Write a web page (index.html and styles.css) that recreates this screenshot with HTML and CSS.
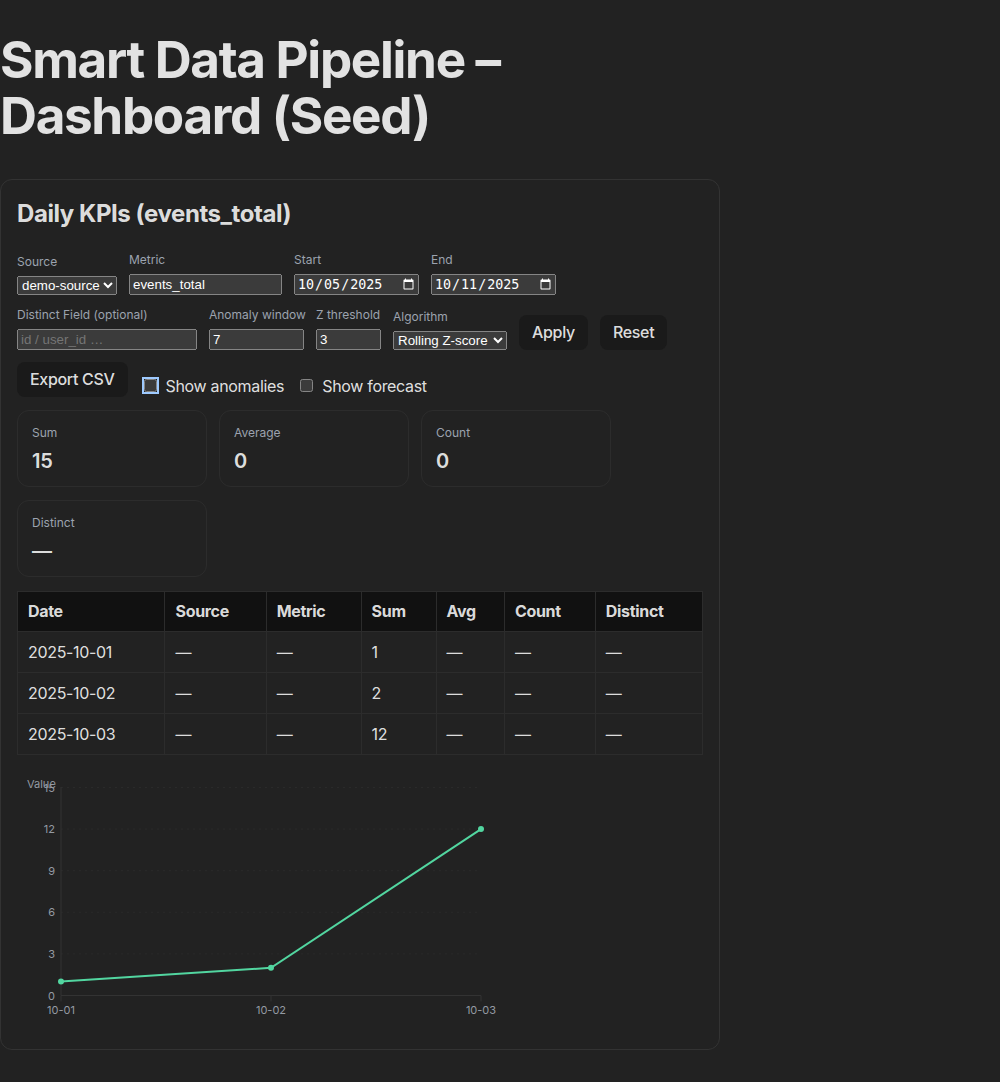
FILE: index.html
```html
<!DOCTYPE html>
<html lang="en">
<head>
<meta charset="utf-8">
<title>Smart Data Pipeline – Dashboard (Seed)</title>
<link rel="stylesheet" href="styles.css">
</head>
<body>
<div class="app">
  <h1 class="title">Smart Data Pipeline – Dashboard (Seed)</h1>
  <section class="card">
    <h2 class="card-title">Daily KPIs (events_total)</h2>

    <div class="controls">
      <label class="field"><span class="field-label">Source</span>
        <select class="ctl sel-source"><option>demo-source</option></select></label>
      <label class="field"><span class="field-label">Metric</span>
        <input class="ctl in-metric" type="text" value="events_total"></label>
      <label class="field"><span class="field-label">Start</span>
        <input class="ctl in-date" type="date" value="2025-10-05"></label>
      <label class="field"><span class="field-label">End</span>
        <input class="ctl in-date" type="date" value="2025-10-11"></label>
      <label class="field"><span class="field-label">Distinct Field (optional)</span>
        <input class="ctl in-distinct" type="text" placeholder="id / user_id …"></label>
      <label class="field"><span class="field-label">Anomaly window</span>
        <input class="ctl in-window" type="number" value="7"></label>
      <label class="field"><span class="field-label">Z threshold</span>
        <input class="ctl in-z" type="number" value="3"></label>
      <label class="field"><span class="field-label">Algorithm</span>
        <select class="ctl sel-algo"><option>Rolling Z-score</option></select></label>
      <button class="btn" type="button">Apply</button>
      <button class="btn" type="button">Reset</button>
    </div>

    <div class="actions">
      <button class="btn" type="button">Export CSV</button>
      <label class="check"><input class="cb cb-focus" type="checkbox">Show anomalies</label>
      <label class="check"><input class="cb" type="checkbox">Show forecast</label>
    </div>

    <div class="kpis">
      <div class="kpi"><div class="kpi-label">Sum</div><div class="kpi-value">15</div></div>
      <div class="kpi"><div class="kpi-label">Average</div><div class="kpi-value">0</div></div>
      <div class="kpi"><div class="kpi-label">Count</div><div class="kpi-value">0</div></div>
      <div class="kpi"><div class="kpi-label">Distinct</div><div class="kpi-value">—</div></div>
    </div>

    <table class="data">
      <thead>
        <tr><th>Date</th><th>Source</th><th>Metric</th><th>Sum</th><th>Avg</th><th>Count</th><th>Distinct</th></tr>
      </thead>
      <tbody>
        <tr><td>2025-10-01</td><td>—</td><td>—</td><td>1</td><td>—</td><td>—</td><td>—</td></tr>
        <tr><td>2025-10-02</td><td>—</td><td>—</td><td>2</td><td>—</td><td>—</td><td>—</td></tr>
        <tr><td>2025-10-03</td><td>—</td><td>—</td><td>12</td><td>—</td><td>—</td><td>—</td></tr>
      </tbody>
    </table>

    <svg class="chart" width="500" height="266" viewBox="0 0 500 266">
      <g class="grid">
        <line x1="44" y1="20.5" x2="464" y2="20.5"/>
        <line x1="44" y1="62.1" x2="464" y2="62.1"/>
        <line x1="44" y1="103.7" x2="464" y2="103.7"/>
        <line x1="44" y1="145.3" x2="464" y2="145.3"/>
        <line x1="44" y1="186.9" x2="464" y2="186.9"/>
      </g>
      <g class="axis">
        <line x1="44" y1="20" x2="44" y2="228.5"/>
        <line x1="44" y1="228.5" x2="464" y2="228.5"/>
        <line x1="44" y1="228.5" x2="44" y2="234.5"/>
        <line x1="254" y1="228.5" x2="254" y2="234.5"/>
        <line x1="464" y1="228.5" x2="464" y2="234.5"/>
      </g>
      <g class="ticks ticks-y">
        <text x="38" y="24.5">15</text>
        <text x="38" y="66.1">12</text>
        <text x="38" y="107.7">9</text>
        <text x="38" y="149.3">6</text>
        <text x="38" y="190.9">3</text>
        <text x="38" y="232.5">0</text>
      </g>
      <g class="ticks ticks-x">
        <text x="44" y="246.7">10-01</text>
        <text x="254" y="246.7">10-02</text>
        <text x="464" y="246.7">10-03</text>
      </g>
      <text class="axis-title" x="10" y="21">Value</text>
      <polyline class="series" points="44,214.6 254,200.8 464,62.1"/>
      <g class="dots">
        <circle cx="44" cy="214.6" r="3"/>
        <circle cx="254" cy="200.8" r="3"/>
        <circle cx="464" cy="62.1" r="3"/>
      </g>
    </svg>
  </section>
</div>
</body>
</html>
```

FILE: styles.css
```css
:root {
  color-scheme: dark;
  font-family: "Inter", "Liberation Sans", sans-serif;
  line-height: 1.5;
  font-weight: 400;
  letter-spacing: -0.02em;
  color: rgba(255, 255, 255, 0.87);
  background-color: #222222;
}

body {
  margin: 0;
}

.app {
  width: 720px;
}

.title {
  font-size: 51.2px;
  line-height: 56.32px;
  font-weight: 700;
  letter-spacing: -0.026em;
  margin: 31px 0 35px;
}

.card {
  box-sizing: border-box;
  width: 720px;
  border: 1px solid #333333;
  border-radius: 12px;
  padding: 16px;
  display: flex;
  flex-direction: column;
  gap: 12px;
}

.card-title {
  font-size: 24px;
  line-height: 36px;
  font-weight: 700;
  letter-spacing: -0.018em;
  margin: 0 0 8px;
}

.controls {
  display: flex;
  flex-wrap: wrap;
  align-items: flex-end;
  gap: 12px;
}

.field {
  display: flex;
  flex-direction: column;
}

.field-label {
  width: 0;
  min-width: 100%;
  white-space: nowrap;
  font-size: 12px;
  line-height: 16px;
  letter-spacing: 0;
  color: #9ca3af;
  margin-bottom: 6px;
}

.ctl {
  box-sizing: border-box;
  margin: 0;
}

.sel-source { width: 100px; }
.in-metric { width: 153px; }
.in-date { width: 125px; }
.in-distinct { width: 180px; }
.in-window { width: 95px; }
.in-z { width: 65px; }
.sel-algo { width: 114px; }

.btn {
  font-family: inherit;
  font-size: 16px;
  font-weight: 500;
  line-height: 19px;
  letter-spacing: -0.02em;
  padding: 7px 12px;
  border: 1px solid transparent;
  border-radius: 8px;
  background-color: #1a1a1a;
  color: rgba(255, 255, 255, 0.87);
  cursor: pointer;
}

.actions {
  display: flex;
  align-items: flex-end;
  gap: 12px;
}

.check {
  display: flex;
  align-items: center;
  gap: 6px;
  font-size: 16px;
  line-height: 24px;
  position: relative;
  top: 1px;
}

.cb {
  margin: 3px 3px 3px 4px;
}

.cb-focus {
  outline: 2px solid #9ecaff;
  outline-offset: 0;
}

.kpis {
  display: flex;
  flex-wrap: wrap;
  gap: 13px 12px;
  max-width: 620px;
  margin: 1px 0 2px;
}

.kpi {
  width: 160px;
  padding: 14px;
  border: 1px solid #2c2c2c;
  border-radius: 12px;
}

.kpi-label {
  font-size: 12px;
  line-height: 15px;
  letter-spacing: 0;
  color: #9ca3af;
  margin-bottom: 10px;
}

.kpi-value {
  font-size: 20px;
  line-height: 22px;
  font-weight: 600;
}

.data {
  width: 100%;
  border-collapse: collapse;
  font-size: 16px;
}

.data th,
.data td {
  text-align: left;
  padding: 8px 10px;
  border: 1px solid #2c2c2c;
  line-height: 24px;
}

.data th {
  background: #111111;
  font-weight: 700;
  padding: 7px 10px 8px;
}

.data td {
  background: #222222;
}

.chart {
  display: block;
}

.grid line {
  stroke: #2a2a2a;
  stroke-dasharray: 2 4;
}

.axis line {
  stroke: #333333;
  stroke-width: 1;
}

.ticks text,
.axis-title {
  font-family: "Inter", "Liberation Sans", sans-serif;
  font-size: 11px;
  letter-spacing: 0;
  fill: #949aa3;
}

.ticks-y text {
  text-anchor: end;
}

.ticks-x text {
  text-anchor: middle;
}

.series {
  fill: none;
  stroke: #52d6a0;
  stroke-width: 2;
}

.dots circle {
  fill: #52d6a0;
}
```
